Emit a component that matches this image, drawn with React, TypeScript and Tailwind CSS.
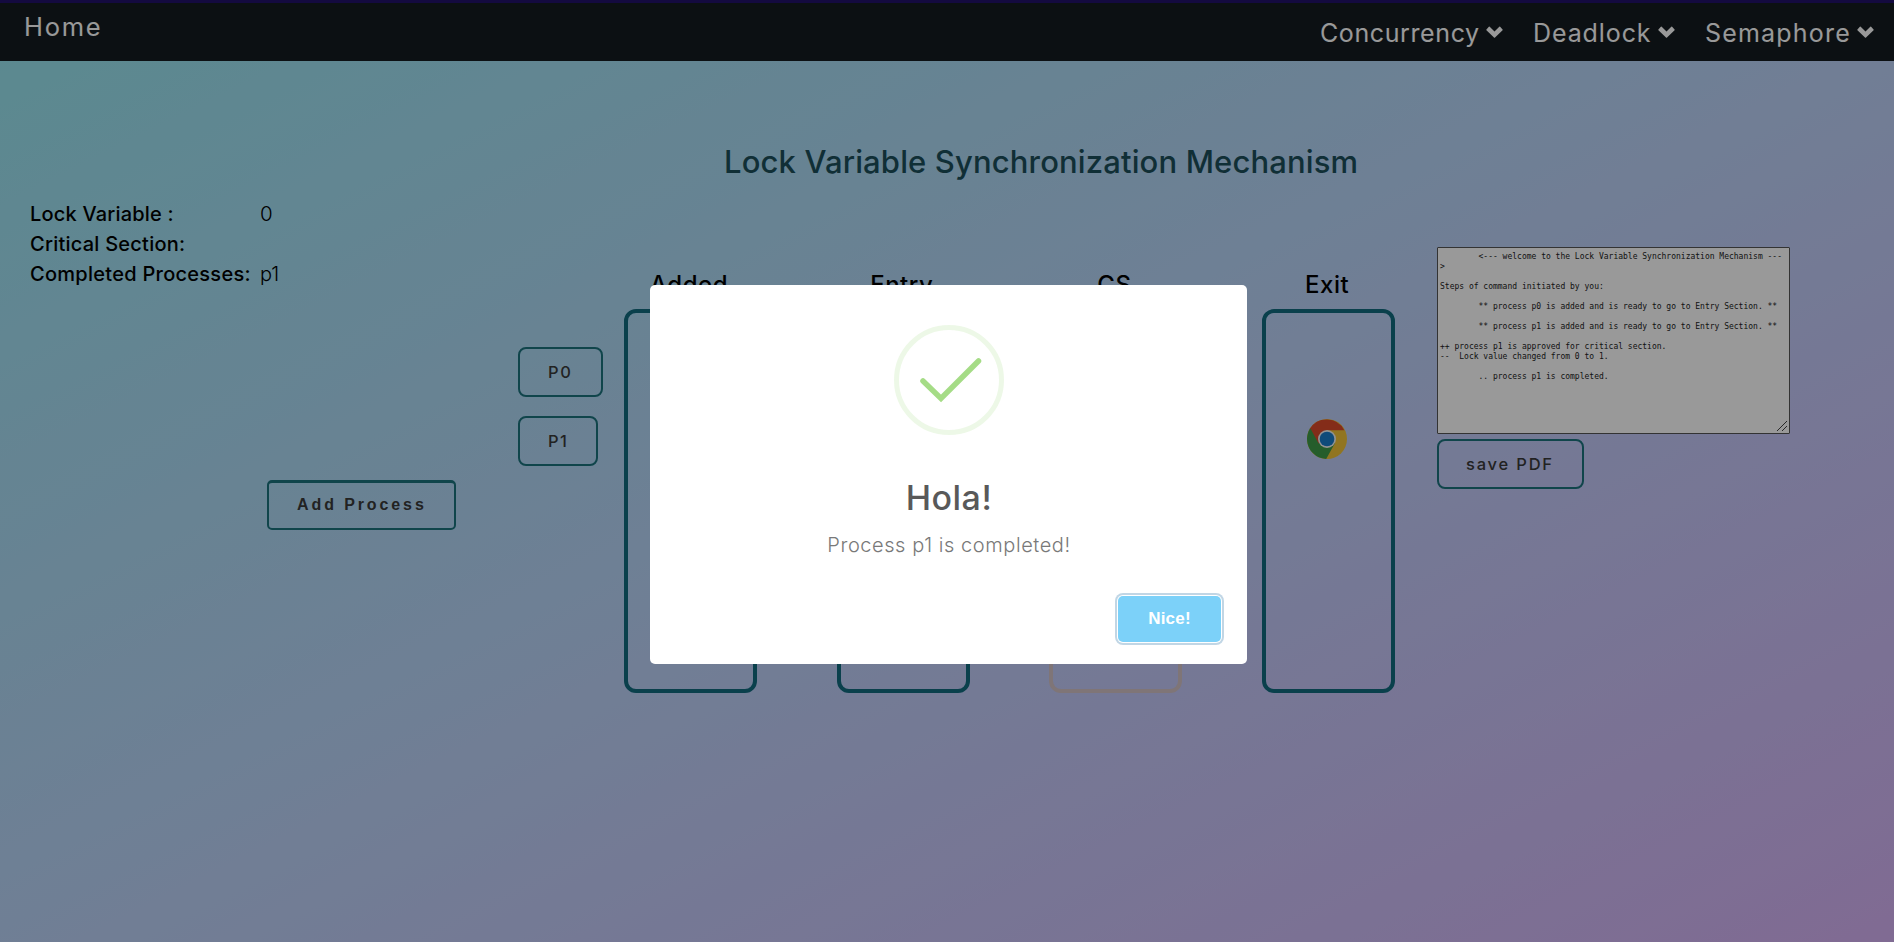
import React from "react";

const FONT = "font-['Inter','Open_Sans',sans-serif]";

function Chevron() {
  return (
    <svg className="mb-[3px] h-[12px] w-[17px] shrink-0 fill-white" viewBox="0 0 16 11">
      <path d="M0.4 3.2 2.7 0.6Q3.1 0.2 3.5 0.6L8 5 12.5 0.6Q12.9 0.2 13.3 0.6L15.6 3.2Q15.9 3.5 15.6 3.9L8.5 10.6Q8 11 7.5 10.6L0.4 3.9Q0.1 3.5 0.4 3.2Z" />
    </svg>
  );
}

function Chrome() {
  return (
    <svg className="mr-[4px] h-10 w-10" viewBox="0 0 48 48">
      <circle cx="24" cy="24" r="24" fill="#f2c437" />
      <path d="M24 24 3.2 12A24 24 0 0 1 44.8 13.5L24 13.5Z" fill="#dc4a2b" />
      <path d="M24 24 3.6 11.4A24 24 0 0 0 23 48L33.5 29Z" fill="#3f9c48" />
      <path d="M24 24 4 11 14 29.5Z" fill="#dc4a2b" />
      <circle cx="24" cy="24" r="10.8" fill="#f4f4f4" />
      <circle cx="24" cy="24" r="8.8" fill="#1a7dcc" />
    </svg>
  );
}

function Column({ title, border, children }: { title: string; border: string; children?: React.ReactNode }) {
  return (
    <div className="flex w-[133px] flex-col items-center">
      <h3 className="h-[40px] pr-[3px] text-[24px] leading-[32px] font-medium tracking-[0.5px] whitespace-nowrap">{title}</h3>
      <div className={`flex h-[384px] w-full justify-center rounded-[12px] border-4 pt-[106px] ${border}`}>{children}</div>
    </div>
  );
}

const outline = "h-[50px] rounded-[8px] border-2 border-[#1c737e] text-left text-[16.5px] font-medium text-[#393939]";

const log = `        <--- welcome to the Lock Variable Synchronization Mechanism ---
>

Steps of command initiated by you:

        ** process p0 is added and is ready to go to Entry Section. **

        ** process p1 is added and is ready to go to Entry Section. **

++ process p1 is approved for critical section.
--  Lock value changed from 0 to 1.

        .. process p1 is completed.`;

export default function App() {
  return (
    <div className={`relative h-[942px] w-[1894px] overflow-hidden bg-linear-to-br/srgb from-[#96e6f0] via-[#bcd3f9] via-52% to-[#d6b2f6] ${FONT}`}>
      <nav className="flex h-[61px] justify-between border-t-[3px] border-[#22116b] bg-[#151c20] pr-[20px] pl-[24px] text-[25px] text-white">
        <span className="pt-[8px] text-[25.5px] leading-[32px] tracking-[1.7px]">Home</span>
        <div className="flex gap-[30px] pt-[14px] leading-[32px]">
          <span className="flex h-8 w-[183px] items-center justify-between tracking-[0.6px]">Concurrency<Chevron /></span>
          <span className="flex h-8 w-[142px] items-center justify-between tracking-[0.9px]">Deadlock<Chevron /></span>
          <span className="flex h-8 w-[169px] items-center justify-between tracking-[1.2px]">Semaphore<Chevron /></span>
        </div>
      </nav>

      <div className="flex">
        <aside className="w-[518px] shrink-0 pt-[138px]">
          <dl className="grid grid-cols-[230px_1fr] pl-[30px] text-[20px] leading-[30px] text-black">
            <dt className="font-medium tracking-[0.2px]">Lock Variable :</dt><dd className="text-[20.5px] font-light">0</dd>
            <dt className="font-medium tracking-[0.24px]">Critical Section:</dt><dd />
            <dt className="font-medium tracking-[0.27px]">Completed Processes:</dt><dd className="font-light">p1</dd>
          </dl>
          <button className="mt-[191px] ml-[267px] block h-[50px] w-[189px] rounded-[5px] border-2 border-t-[3px] border-[#1c737e] pb-[2px] pl-[28px] text-left font-['Liberation_Sans',Arial,sans-serif] text-[16px] font-bold tracking-[2.9px] whitespace-nowrap text-[#393939]">Add Process</button>
        </aside>

        <main className="w-[919px] shrink-0 pt-[81px]">
          <h1 className="ml-[206px] text-[31px] leading-[40px] font-medium tracking-[0.14px] whitespace-nowrap text-[#1c4f5b]">Lock Variable Synchronization Mechanism</h1>
          <div className="flex pt-[87px]">
            <div className="flex w-[106px] flex-col items-start gap-[19px] pt-[78px]">
              <button className={`${outline} w-[85px] pl-[28px] tracking-[1.7px]`}>P0</button>
              <button className={`${outline} w-[80px] pl-[28px] tracking-[1.3px]`}>P1</button>
            </div>
            <div className="flex gap-[79.7px]">
              <Column title="Added" border="border-[#126b7f]" />
              <Column title="Entry" border="border-[#126b7f]" />
              <Column title="CS" border="border-[#d4c3c6]" />
              <Column title="Exit" border="border-[#126b7f]"><Chrome /></Column>
            </div>
          </div>
        </main>

        <section className="flex w-[353px] shrink-0 flex-col items-start gap-[5px] pt-[186px]">
          <div className="relative">
            <textarea readOnly spellCheck={false} className="block h-[187px] w-[353px] resize-none overflow-hidden rounded-[1px] border border-[#555] bg-white px-[2px] py-[4px] font-['DejaVu_Sans_Mono',monospace] text-[8px] leading-[10px] text-[#222]" value={log} />
            <svg className="absolute right-[3px] bottom-[3px] h-[10px] w-[10px]" viewBox="0 0 10 10" fill="none" stroke="#444">
              <path d="M0 10 10 0M5 10 10 5" />
            </svg>
          </div>
          <button className={`${outline} w-[147px] pl-[27px] tracking-[1.8px]`}>save PDF</button>
        </section>
      </div>

      <div className="absolute inset-0 bg-black/40" />

      <div role="dialog" className="absolute top-[285px] left-[650px] flex h-[379px] w-[597px] flex-col items-center rounded-[5px] bg-white pt-[40px]">
        <svg className="h-[110px] w-[110px]" viewBox="0 0 110 110" fill="none">
          <circle cx="55" cy="55" r="52.5" stroke="#a5dc86" strokeOpacity="0.2" strokeWidth="5" />
          <path d="M29 56 47 73.5 84.5 36" stroke="#a5dc86" strokeWidth="5.5" strokeLinecap="round" />
        </svg>
        <h2 className="mt-[42px] pl-[1px] text-[34px] leading-[41px] font-medium tracking-[0.5px] text-[#595959]">Hola!</h2>
        <p className="mt-[12px] pl-[1px] text-[20px] leading-[31px] font-light tracking-[0.57px] text-[#797979]">Process p1 is completed!</p>
        <button className="mt-[35px] mr-[26px] h-[46px] w-[103px] self-end rounded-[5px] bg-[#7cd1f9] pb-px font-['Liberation_Sans',Arial,sans-serif] text-[17px] font-bold tracking-[0.2px] text-white shadow-[0_0_0_1px_#fff,0_0_0_3px_rgba(43,114,165,0.29)]">Nice!</button>
      </div>
    </div>
  );
}
